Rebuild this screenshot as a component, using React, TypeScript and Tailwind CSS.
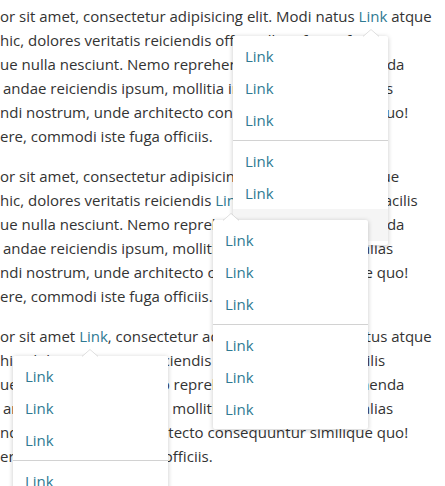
import React from "react";

const L = ({ children }: { children: React.ReactNode }) => (
  <span className="text-[#2f7a93]">{children}</span>
);

function Item({ active }: { active?: boolean }) {
  return (
    <div className={`h-8 px-3 leading-8 text-[#2f7a93] ${active ? "bg-[#f5f5f5]" : ""}`}>Link</div>
  );
}

function Menu({ pos, arrow, activeLast }: { pos: string; arrow: string; activeLast?: boolean }) {
  return (
    <div className={`absolute ${pos} w-[155px] rounded-[2px] bg-white py-1 shadow-[0_1px_5px_rgba(0,0,0,0.22)]`}>
      <svg className={`absolute ${arrow} top-[-7px]`} width="16" height="8" viewBox="0 0 16 8">
        <polygon points="0,7.5 8,0.5 16,7.5" fill="white" />
        <polyline points="0,7.5 8,0.5 16,7.5" fill="none" stroke="rgba(0,0,0,0.12)" strokeWidth="1" />
      </svg>
      <Item />
      <Item />
      <Item />
      <div className="my-1 h-px bg-[#d2d2d2]" />
      <Item />
      <Item />
      <Item active={activeLast} />
    </div>
  );
}

function Rest() {
  return (
    <>
      <br />
      ue nulla nesciunt. Nemo reprehenderit earum commenda
      <br />
      <span className="pl-[3px]">andae reiciendis ipsum, mollitia impedit nam dolor alias</span>
      <br />
      ndi nostrum, unde architecto consequuntur similique quo!
      <br />
      ere, commodi iste fuga officiis.
    </>
  );
}

export default function App() {
  return (
    <div
      className="relative h-[486px] w-[445px] overflow-hidden bg-white pt-1 text-[15px] leading-6 text-[#333333]"
      style={{ fontFamily: '"Open Sans", sans-serif' }}
    >
      <p className="mb-4 whitespace-nowrap">
        or sit amet, consectetur adipisicing elit. Modi natus <L>Link</L> atque
        <br />
        hic, dolores veritatis reiciendis officiis illum fugiat facilis
        <Rest />
      </p>
      <p className="mb-4 whitespace-nowrap">
        or sit amet, consectetur adipisicing elit. Modi natus atque
        <br />
        hic, dolores veritatis reiciendis <L>Link</L> officiis illum fugiat facilis
        <Rest />
      </p>
      <p className="mb-4 whitespace-nowrap">
        or sit amet <L>Link</L>, consectetur adipisicing elit. Modi natus atque
        <br />
        hic, dolores veritatis reiciendis officiis illum fugiat facilis
        <Rest />
      </p>

      <Menu pos="left-[233px] top-[36px]" arrow="left-[130px]" activeLast />
      <Menu pos="left-[213px] top-[220px]" arrow="left-[10px]" />
      <Menu pos="left-[13px] top-[356px]" arrow="left-[69px]" />
    </div>
  );
}
